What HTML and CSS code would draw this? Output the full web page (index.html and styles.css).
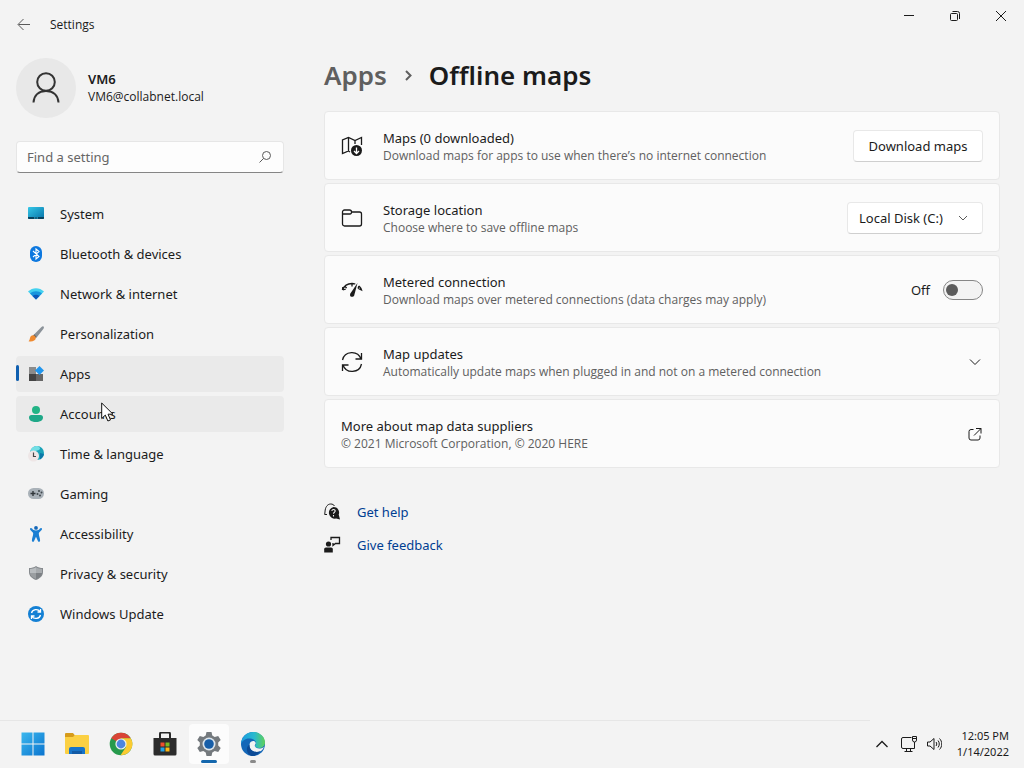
FILE: index.html
```html
<!DOCTYPE html>
<html lang="en">
<head>
  <meta charset="UTF-8">
  <title>Settings</title>
  <meta name="viewport" content="width=device-width, initial-scale=1" />
  <link rel="stylesheet" href="styles.css">
</head>
<body>
  <header class="titlebar">
    <button class="back" aria-label="Back">
      <svg width="16" height="16" viewBox="0 0 16 16"><path d="M14 7.500H2.500M7.500 2L2 7.500l5.500 5.500" class="line" /></svg>
    </button>
    <span class="app-name">Settings</span>
    <div class="window-buttons">
      <button aria-label="Minimize"><svg width="12" height="12" viewBox="0 0 12 12"><path d="M1 5.500h10" class="dark" /></svg></button>
      <button aria-label="Restore"><svg width="12" height="12" viewBox="0 0 12 12"><rect x="1.500" y="3.500" width="7" height="7" rx="1" class="dark" /><path d="M3.500 1.500H8.500a2 2 0 0 1 2 2V9" class="dark" /></svg></button>
      <button aria-label="Close"><svg width="12" height="12" viewBox="0 0 12 12"><path d="M1 1l10 10M11 1L1 11" class="dark" /></svg></button>
    </div>
  </header>

  <div class="layout">
    <aside class="sidebar">
      <div class="profile">
        <div class="avatar">
          <svg width="30" height="34" viewBox="0 0 30 34"><circle cx="15" cy="11" r="8.800" /><path d="M2.500 31.500c.5-7.500 5.500-11.500 12.500-11.500s12 4 12.500 11.500" /></svg>
        </div>
        <div>
          <div class="user-name">VM6</div>
          <div class="user-mail">VM6@collabnet.local</div>
        </div>
      </div>

      <div class="search">
        <input type="text" placeholder="Find a setting" aria-label="Find a setting" />
        <svg width="14" height="14" viewBox="0 0 14 14"><circle cx="8.500" cy="5.500" r="4" class="line" /><path d="M5.500 8.500L1.500 12.500" class="line" /></svg>
      </div>

      <nav class="nav">
        <a href="#system">
          <svg width="16" height="16" viewBox="0 0 16 16"><defs><linearGradient id="sys" x1="0" y1="0" x2="1" y2="1"><stop offset="0" stop-color="#35c8e8" /><stop offset="1" stop-color="#0672a8" /></linearGradient></defs><rect y="1" width="16" height="12" rx="1" fill="url(#sys)" /><path d="M0 11h16v1a1 1 0 0 1-1 1H1a1 1 0 0 1-1-1z" fill="#07425f" /><path d="M6 12h4" stroke="#3fc3e6" stroke-dasharray="1 .5" /></svg>
          System
        </a>
        <a href="#bluetooth">
          <svg width="16" height="16" viewBox="0 0 16 16"><rect x="2" width="12" height="16" rx="6" fill="#0d78df" /><path d="M5 5l6 5.500L8 13V3l3 2.500L5 11" fill="none" stroke="#fff" stroke-width="1.100" /></svg>
          Bluetooth &amp; devices
        </a>
        <a href="#network">
          <svg width="16" height="16" viewBox="0 0 16 16"><path d="M0 5.500c4.500-4.500 11.500-4.500 16 0l-8 8z" fill="#43d1ef" /><path d="M2 7.500c3.500-3 8.500-3 12 0L8 13.500z" fill="#1795dd" /><path d="M4.500 10c2-1.600 5-1.600 7 0L8 13.500z" fill="#0d57b9" /></svg>
          Network &amp; internet
        </a>
        <a href="#personalization">
          <svg width="16" height="16" viewBox="0 0 16 16"><path d="M15.500.5c.8.8.4 1.600-.2 2.500L9 11 6 8.500 13.500 1c.8-.8 1.500-1 2-.5z" fill="#8b9299" /><path d="M6.300 8.300L9 11l-1.200 1L5 9.500z" fill="#5a5f64" /><path d="M5 9.300c1.800.2 3 1.500 2.800 3C7.300 15 4 16 .5 15.200c1.300-.7 1-1.800 1.500-3.200.5-1.700 1.500-2.800 3-2.700z" fill="#ef8a30" /></svg>
          Personalization
        </a>
        <a href="#apps" class="active">
          <svg width="16" height="16" viewBox="0 0 16 16"><path d="M1 1h7v7H1z" fill="#8b8b8b" /><path d="M1 8h7v7H1z" fill="#444" /><path d="M8 8h7v7H8z" fill="#666" /><path d="M11.500 0l4.500 4.500L11.500 9 7 4.500z" fill="#2196ed" /></svg>
          Apps
        </a>
        <a href="#accounts" class="hover">
          <svg width="16" height="16" viewBox="0 0 16 16"><circle cx="8" cy="4" r="4" fill="#23b486" /><path d="M3.500 9h9A2.500 2.500 0 0 1 15 11.500C15 14.500 12 16 8 16s-7-1.500-7-4.500A2.500 2.500 0 0 1 3.500 9z" fill="#1fa888" /></svg>
          Accounts
        </a>
        <a href="#time">
          <svg width="16" height="16" viewBox="0 0 16 16"><circle cx="9" cy="7" r="7" fill="#1ba3b8" /><path d="M8 0c3 0 5 2 3.500 3.500S8 4 7 6L2.500 5C3 2.500 5 .5 8 0z" fill="#73dfe5" /><path d="M12 7l4 1c-.5 2.500-2 4.500-4 5.500z" fill="#0b78a8" /><circle cx="5.500" cy="10" r="5.500" fill="#eee6e6" /><path d="M5.500 6.500V10.500H8" fill="none" stroke="#454545" stroke-width="1.200" /></svg>
          Time &amp; language
        </a>
        <a href="#gaming">
          <svg width="16" height="16" viewBox="0 0 16 16"><rect y="2" width="16" height="11" rx="5.500" fill="#a9b1b8" /><path d="M2.500 7.500h5M5 5v5" stroke="#31363a" stroke-width="1.400" /><g fill="#41484d"><circle cx="11" cy="5" r="1" /><circle cx="9.500" cy="8" r="1" /><circle cx="13.500" cy="6.500" r="1" /><circle cx="12" cy="9.500" r="1" /></g></svg>
          Gaming
        </a>
        <a href="#accessibility">
          <svg width="16" height="16" viewBox="0 0 16 16"><circle cx="8" cy="1.900" r="1.900" fill="#1467b8" /><path d="M2.300 2.200c.6-.6 1.200-.3 1.800.4C5 4 6 4.500 8 4.500s3-.5 3.900-1.900c.6-.7 1.200-1 1.800-.4.6.6.3 1.300-.1 1.900-.7 1-2.800 2.200-2.800 3.400 0 2 1.300 5 1.300 7 0 1.700-1.800 1.700-2.200.4L8 10.800l-1.900 4.100c-.4 1.300-2.200 1.300-2.200-.4 0-2 1.300-5 1.300-7 0-1.200-2.100-2.400-2.800-3.400-.4-.6-.7-1.300-.1-1.900z" fill="#1b7fd3" /></svg>
          Accessibility
        </a>
        <a href="#privacy">
          <svg width="16" height="16" viewBox="0 0 16 16"><path d="M8 0c2 1.500 4.500 2 7 2v4c0 4-3 6.500-7 8-4-1.500-7-4-7-8V2c2.500 0 5-.5 7-2z" fill="#85898d" /><path d="M8 1.300V7H2V3c2.200 0 4.200-.5 6-1.700z" fill="#b8bcbf" /><path d="M8 7h6c-.3 3-2.500 4.600-6 5.900z" fill="#7d8185" /><path d="M8 1.300C9.800 2.500 11.800 3 14 3v4H8z" fill="#a7abae" /><path d="M2 7h6v5.900C4.500 11.600 2.300 10 2 7z" fill="#9a9ea1" /></svg>
          Privacy &amp; security
        </a>
        <a href="#update">
          <svg width="16" height="16" viewBox="0 0 16 16"><circle cx="8" cy="8" r="8" fill="#1480d4" /><path d="M3.500 7c1-4 6.500-4.500 8.500-1.500M12.500 3v3h-3M12.500 9c-1 4-6.500 4.500-8.500 1.500M3.500 13v-3h3" fill="none" stroke="#fff" stroke-width="1.300" /></svg>
          Windows Update
        </a>
      </nav>
    </aside>

    <main class="content">
      <h1 class="crumbs">
        <a href="#apps">Apps</a>
        <svg width="12" height="16" viewBox="0 0 12 16"><path d="M4 3l4.500 4.500L4 12" /></svg>
        <span>Offline maps</span>
      </h1>

      <div class="cards">
        <section class="card">
          <svg width="22" height="22" viewBox="0 0 22 22"><path d="M9 17L7.500 16 1.500 18.500V5l6-2.500L14 5.500l6.500-3V10M7.500 2.500V16M14 5.500V9" class="dark bold" /><circle cx="15.500" cy="15.500" r="5.500" fill="#1b1b1b" /><path d="M15.500 12.500v6M13 16l2.500 2.500L18 16" fill="none" stroke="#fff" stroke-width="1.300" /></svg>
          <div class="text">
            <div class="title">Maps (0 downloaded)</div>
            <div class="desc">Download maps for apps to use when there’s no internet connection</div>
          </div>
          <button class="btn">Download maps</button>
        </section>

        <section class="card">
          <svg width="22" height="22" viewBox="0 0 22 22"><path d="M1.500 6.500V5a2 2 0 0 1 2-2h5a2 2 0 0 1 2 2H18.500a2 2 0 0 1 2 2v10a2 2 0 0 1-2 2h-15a2 2 0 0 1-2-2zM1.500 7H9a1.500 1.500 0 0 0 1.500-1.500V5" class="dark bold" /></svg>
          <div class="text">
            <label class="title" for="disk">Storage location</label>
            <div class="desc">Choose where to save offline maps</div>
          </div>
          <div class="select">
            <select id="disk"><option>Local Disk (C:)</option></select>
            <svg width="10" height="10" viewBox="0 0 10 10"><path d="M1 3l4 4 4-4" class="line" /></svg>
          </div>
        </section>

        <section class="card">
          <svg width="22" height="22" viewBox="0 0 22 22"><path d="M1.500 11C3 7 6.500 4.500 11 4.500c1.300 0 2.300.2 3.300.5M1.500 11l.3-3M2 11l2.800-1M4 7.500l1.700 1.500M11 4.500V7.500M18 7c1.100 1.100 2 2.400 2.500 4l-3.200-1.500M18 7l-1 2.500" class="dark bold" /><path d="M16.500 4L13.200 16.500c-.5 1.700-4.200 2-4.200-.6 0-.7.300-1.200.7-1.800z" fill="#1b1b1b" /></svg>
          <div class="text">
            <label class="title" for="metered">Metered connection</label>
            <div class="desc">Download maps over metered connections (data charges may apply)</div>
          </div>
          <span class="state">Off</span>
          <input class="toggle" type="checkbox" role="switch" id="metered" />
        </section>

        <section class="card">
          <svg width="22" height="22" viewBox="0 0 22 22"><path d="M1.500 9C3.500-.5 17-1 20 8M20.500 2v6h-6M20.500 13C18.500 22.500 5 23 2 14M1.500 20v-6h6" class="dark bold" /></svg>
          <div class="text">
            <div class="title">Map updates</div>
            <div class="desc">Automatically update maps when plugged in and not on a metered connection</div>
          </div>
          <button class="icon-btn" aria-label="Show map update settings">
            <svg width="16" height="16" viewBox="0 0 16 16"><path d="M3 5.500l5 5 5-5" class="dark" /></svg>
          </button>
        </section>

        <a class="card" href="#suppliers">
          <div class="text">
            <div class="title">More about map data suppliers</div>
            <div class="desc">© 2021 Microsoft Corporation, © 2020 HERE</div>
          </div>
          <svg width="16" height="16" viewBox="0 0 16 16"><path d="M6.500 3.500H4a2 2 0 0 0-2 2V12a2 2 0 0 0 2 2h7a2 2 0 0 0 2-2V9.500M9 2.500h5V7.500M14 2.500L7 9.500" class="dark" /></svg>
        </a>
      </div>

      <div class="help">
        <a href="#help">
          <svg width="18" height="18" viewBox="0 0 18 18"><path d="M.7 11.500L1.200 7C1.800 3.500 3.800 1 6.700 1c1.800 0 3 .7 3.800 2M.7 11.500H3" class="dark" /><path d="M9.500 4a5.500 5.500 0 0 1 5.200 7.600L16 16.500l-3.900-1A5.500 5.500 0 1 1 9.500 4z" fill="#1b1b1b" /><path d="M7.800 8c.3-2 3.500-1.800 3.400 0-.1 1.200-1.700 1.300-1.700 2.700M9.500 12v1.400" fill="none" stroke="#f3f3f3" stroke-width="1.100" /></svg>
          Get help
        </a>
        <a href="#feedback">
          <svg width="18" height="18" viewBox="0 0 18 18"><circle cx="4.500" cy="8" r="2.600" fill="#1b1b1b" /><path d="M2 11.500h5c1.200 0 1.800.8 1.800 1.800V16.500H.2v-3.200c0-1 .6-1.800 1.800-1.800z" fill="#1b1b1b" /><path d="M7 4V1.500h8.500v6H11.500L9 9.500V7" class="dark bold" /></svg>
          Give feedback
        </a>
      </div>
    </main>
  </div>

  <footer class="taskbar">
    <div class="pinned">
      <button aria-label="Start">
        <svg width="24" height="24" viewBox="0 0 24 24"><defs><linearGradient id="win" x1="0" y1="0" x2="1" y2="1"><stop offset="0" stop-color="#3cb8ee" /><stop offset="1" stop-color="#0a74cf" /></linearGradient></defs><path d="M.5.5h11v11H.5zM12.500.5h11v11h-11zM.5 12.500h11v11H.5zM12.500 12.500h11v11h-11z" fill="url(#win)" /></svg>
      </button>
      <button aria-label="File Explorer">
        <svg width="26" height="24" viewBox="0 0 26 24"><path d="M1 2a1 1 0 0 1 1-1h7l2 2.500L9 6H1z" fill="#d69b1b" /><path d="M1 5h8l2-2h13a1 1 0 0 1 1 1v17a1 1 0 0 1-1 1H2a1 1 0 0 1-1-1z" fill="#fbd043" /><path d="M5 22v-5a2 2 0 0 1 2-2h12a2 2 0 0 1 2 2v5z" fill="#1674c9" /><path d="M8 19h10v3H8z" fill="#125aa5" /></svg>
      </button>
      <button aria-label="Chrome">
        <svg width="24" height="24" viewBox="0 0 24 24"><circle cx="12" cy="12" r="11.300" fill="#279a4c" /><path d="M12 12L2.200 6.300A11.300 11.300 0 0 1 21.800 6.300H12z" fill="#d94436" /><path d="M12 6.300h9.800A11.300 11.300 0 0 1 11.500 23.300L17 15z" fill="#fbcb31" /><circle cx="12" cy="12" r="5.600" fill="#eef3ee" /><circle cx="12" cy="12" r="4.400" fill="#4d86df" /></svg>
      </button>
      <button aria-label="Microsoft Store">
        <svg width="24" height="24" viewBox="0 0 24 24"><path d="M7 6V2a1.500 1.500 0 0 1 1.500-1.500h7A1.500 1.500 0 0 1 17 2v4" fill="none" stroke="#292929" stroke-width="2" /><path d="M.5 6h23v16a1.500 1.500 0 0 1-1.500 1.500H2A1.500 1.500 0 0 1 .5 22z" fill="#2b2b2b" /><path d="M7.500 10.500h4v4h-4z" fill="#ef4e2c" /><path d="M12.500 10.500h4v4h-4z" fill="#7bb825" /><path d="M7.500 15.500h4v4h-4z" fill="#22a1e4" /><path d="M12.500 15.500h4v4h-4z" fill="#fdb714" /></svg>
      </button>
      <button class="current" aria-label="Settings">
        <svg width="26" height="26" viewBox="0 0 26 26"><path d="M10.500 1h5l.8 3.500 2.400 1.400 3.500-1 2.500 4.200-2.500 2.500v2.800l2.500 2.500-2.500 4.200-3.500-1-2.400 1.400-.8 3.500h-5l-.8-3.500-2.400-1.400-3.500 1-2.500-4.200 2.500-2.500v-2.800L1.300 9.100l2.500-4.200 3.500 1 2.400-1.400z" fill="#74797d" /><circle cx="13" cy="13" r="6.500" fill="#dce5ec" /><circle cx="13" cy="13" r="4.800" fill="#175ea8" /></svg>
      </button>
      <button class="running" aria-label="Edge">
        <svg width="26" height="26" viewBox="0 0 26 26"><defs><linearGradient id="edge" x1="0" y1="0" x2="1" y2="0"><stop offset="0" stop-color="#1b9cdf" /><stop offset=".55" stop-color="#29b9cf" /><stop offset="1" stop-color="#5fd158" /></linearGradient></defs><circle cx="13" cy="13" r="12" fill="#1467b8" /><path d="M1 13C1.500 6 6.500 1 13 1c7 0 12 5 12 10.500 0 3.500-2.500 5.500-6 5.500-2.500 0-4-.8-4-2 0-.8 1-1 1-3C16 9.500 13 7.500 9 7.500 5 7.500 2 10 1 13z" fill="url(#edge)" /><path d="M9.500 13.500C10 10.500 12 9.800 14 10c1.500.5 2 2 1.500 3-.5.9-1 1.300-.5 2.500 1 2 5 3 9 0.500-.8 2-2 3.200-3 4-6 2.500-12-.5-11.500-6.500z" fill="#f3f3f3" /><path d="M9.500 13.500c-.5 5 4 9 11 6.800C18 24 14 25.500 11 24.800 6 22.500 5.500 16 9.500 13.500z" fill="#0c4a96" /></svg>
      </button>
    </div>
    <div class="tray">
      <svg class="more" width="14" height="14" viewBox="0 0 14 14"><path d="M1.500 10L7 4.500 12.500 10" class="dark bold" /></svg>
      <svg width="18" height="18" viewBox="0 0 18 18"><path d="M11.500 2.500H3A1.500 1.500 0 0 0 1.500 4v8A1.500 1.500 0 0 0 3 13.500h11.500V7M6.500 13.500v3M10.500 13.500v3M4.500 16.500h8M12.500 1.500h4V5a2 2 0 0 1-4 0zM12.500 3.500h4" class="dark" /></svg>
      <svg width="16" height="16" viewBox="0 0 16 16"><path d="M1.500 6v4h2.500l4 3.500v-11L4 6zM10 6c1 1.200 1 2.800 0 4M12 4.500c1.700 2 1.700 5 0 7M13.500 2.500c3 3 3 8 0 11" class="dark" /></svg>
      <div class="clock">
        <div>12:05 PM</div>
        <div>1/14/2022</div>
      </div>
    </div>
  </footer>

  <svg class="cursor" width="13" height="20" viewBox="0 0 13 20"><path d="M.7 1v15.500l3.600-3.400 2.600 5.900 2.600-1.100L7 12.200h5z" fill="#fff" stroke="#111" /></svg>
</body>
</html>
```
FILE: styles.css
```css
* { box-sizing: border-box; }
body { margin: 0; min-height: 100vh; display: flex; flex-direction: column; background: #f3f3f3; color: #1b1b1b; font-family: "Noto Sans", "Open Sans", sans-serif; font-size: 13px; line-height: 20px; }
button, input, select { font: inherit; color: inherit; }
button { border: none; background: none; padding: 0; }
a { color: inherit; text-decoration: none; }
svg { flex: none; display: block; }
.line { fill: none; stroke: #5a5a5a; }
.dark { fill: none; stroke: #1b1b1b; }
.bold { stroke-width: 1.300; }

.titlebar { display: flex; align-items: center; height: 49px; padding-left: 16px; }
.back { margin-right: 18px; }
.app-name { font-family: "Open Sans", sans-serif; font-size: 12px; }
.window-buttons { display: flex; align-self: flex-start; margin-left: auto; }
.window-buttons button { width: 46px; height: 32px; display: grid; place-items: center; }

.layout { flex: 1; display: grid; grid-template-columns: 268px 1fr; gap: 40px; padding: 0 24px 0 16px; }

.profile { display: flex; align-items: center; gap: 12px; margin-top: 9px; }
.avatar { width: 60px; height: 60px; border-radius: 50%; background: #e8e8e8; display: grid; place-items: center; }
.avatar svg { fill: none; stroke: #333; stroke-width: 2; }
.user-name { font-weight: 600; line-height: 18px; }
.user-mail { font-family: "Open Sans", sans-serif; font-size: 12px; line-height: 18px; }

.search { position: relative; margin: 23px 0; }
.search input { display: block; width: 100%; height: 32px; padding: 0 36px 0 10px; border: 1px solid #e6e6e6; border-bottom-color: #858585; border-radius: 4px; background: #fdfdfd; }
.search input::placeholder { color: #666; opacity: 1; }
.search svg { position: absolute; right: 12px; top: 9px; }

.nav { display: grid; gap: 4px; }
.nav a { position: relative; display: flex; align-items: center; gap: 16px; height: 36px; padding-left: 12px; border-radius: 4px; }
.nav .active, .nav .hover { background: #eaeaea; }
.nav .active::before { content: ""; position: absolute; left: 0; top: 9px; width: 3px; height: 16px; border-radius: 2px; background: #0f5fb0; }

.crumbs { display: flex; align-items: center; gap: 15px; margin: 8px 0 17px; font-size: 26px; line-height: 37px; font-weight: 600; }
.crumbs a { color: #5f5f5f; }
.crumbs svg { fill: none; stroke: #5f5f5f; stroke-width: 2; }

.cards { display: grid; gap: 3px; }
.card { display: flex; align-items: center; height: 69px; padding: 0 16px; border: 1px solid #e8e8e8; border-radius: 4px; background: #fbfbfb; }
.card > svg:first-child { margin-right: 20px; }
.text { flex: 1; padding-top: 2px; }
.title { display: block; line-height: 18px; }
.desc { font-family: "Open Sans", sans-serif; font-size: 12px; line-height: 18px; color: #606060; }
.btn { width: 130px; height: 32px; border: 1px solid #e8e8e8; border-bottom-color: #cfcfcf; border-radius: 4px; background: #fff; }
.select { position: relative; }
.select select { width: 136px; height: 32px; padding: 0 30px 0 11px; border: 1px solid #e8e8e8; border-bottom-color: #cfcfcf; border-radius: 4px; background: #fff; appearance: none; }
.select svg { position: absolute; right: 15px; top: 11px; pointer-events: none; }
.state { margin-right: 13px; }
.toggle { appearance: none; display: flex; align-items: center; width: 40px; height: 20px; margin: 0; padding: 0 2px; border: 1px solid #868686; border-radius: 10px; background: #f3f3f3; }
.toggle::before { content: ""; width: 12px; height: 12px; border-radius: 50%; background: #5c5c5c; }
.toggle:checked { justify-content: flex-end; }

.help { display: grid; justify-items: start; gap: 13px; margin-top: 34px; color: #003e92; }
.help a { display: flex; align-items: center; gap: 15px; }

.taskbar { display: flex; align-items: center; justify-content: space-between; height: 48px; padding: 0 15px 0 13px; background: linear-gradient(90deg, #e6e6e6 85%, #f3f3f3 85%) top / 100% 1px no-repeat; }
.pinned { display: flex; gap: 4px; }
.pinned button { position: relative; width: 40px; height: 40px; display: grid; place-items: center; border-radius: 4px; }
.pinned .current { background: #fcfcfc; }
.pinned .current::after, .pinned .running::after { content: ""; position: absolute; bottom: 1px; left: 12px; width: 16px; height: 3px; border-radius: 2px; background: #1467ad; }
.pinned .running::after { left: 17px; width: 6px; background: #8a8a8a; }
.tray { display: flex; align-items: center; gap: 8px; }
.more { margin-right: 3px; }
.clock { margin-left: 7px; font-size: 11px; line-height: 16px; text-align: right; }

.cursor { position: absolute; left: 101px; top: 402px; }
```
